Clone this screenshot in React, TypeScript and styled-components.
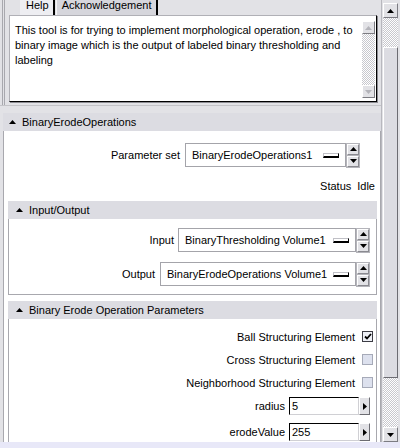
import React from 'react';
import styled, { createGlobalStyle } from 'styled-components';

const BG = '#e2e2e6';
const HEADER = '#dcdce2';
const LINE = '#a8a8ae';
const DITHER = 'repeating-conic-gradient(#ffffff 0 25%, #c8c8ce 0 50%) 0 0 / 2px 2px';

const GlobalStyle = createGlobalStyle`
  html, body { margin: 0; padding: 0; background: ${BG}; }
  body {
    font-family: "Liberation Sans", Arial, Helvetica, sans-serif;
    font-size: 11px;
    color: #000;
  }
  * { box-sizing: border-box; }
`;

const Svg = styled.svg`
  display: block;
  flex: none;
`;

type Dir = 'up' | 'down' | 'right';
const Arrow: React.FC<{ dir: Dir; w: number; h: number; color?: string }> = ({ dir, w, h, color = '#000' }) => {
  const pts =
    dir === 'up'
      ? `0,${h} ${w / 2},0 ${w},${h}`
      : dir === 'down'
      ? `0,0 ${w},0 ${w / 2},${h}`
      : `0,0 ${w},${h / 2} 0,${h}`;
  return (
    <Svg width={w} height={h} viewBox={`0 0 ${w} ${h}`}>
      <polygon points={pts} fill={color} />
    </Svg>
  );
};

const Screen = styled.div`
  width: 400px;
  height: 448px;
  display: flex;
  flex-direction: column;
  overflow: hidden;
  background: ${BG};
`;

const Window = styled.div`
  flex: 0 0 442px;
  display: flex;
  overflow: hidden;
`;

const BottomStrip = styled.div`
  flex: 1;
  background: #e8e8f8;
`;

const Main = styled.div`
  width: 381px;
  flex: none;
  display: flex;
  flex-direction: column;
  overflow: hidden;
`;

/* ---------- top tab panel ---------- */
const TopPanel = styled.div`
  height: 106px;
  flex: none;
  margin-bottom: 7px;
  display: flex;
  flex-direction: column;
  border-bottom: 1px solid #c4c4c8;
  box-shadow: inset 2px 0 0 ${BG}, inset 3px 0 0 ${LINE}, inset 4px 0 0 ${BG}, inset 5px 0 0 ${LINE};
`;

const TabBar = styled.div`
  height: 15px;
  display: flex;
  padding-left: 20px;
  flex: none;
`;

const Tab = styled.div<{ $active?: boolean }>`
  height: 15px;
  line-height: 11px;
  padding: 0 4px 0 5px;
  background: ${(p) => (p.$active ? '#eeeef2' : '#d6d6dc')};
  border-right: 2px solid #000;
  border-left: 1px solid ${(p) => (p.$active ? 'transparent' : '#f4f4f6')};
  margin-right: 1px;
`;

const TextBox = styled.div`
  margin-left: 9px;
  width: 368px;
  height: 87px;
  background: #fff;
  border: 1px solid;
  border-color: #b0b0b6 #000 #000 #b0b0b6;
  box-shadow: 1px 1px 0 #8c8c92;
  display: flex;
`;

const TextContent = styled.div`
  flex: 1;
  padding: 7px 5px;
  line-height: 15px;
  white-space: pre-line;
`;

const MiniScroll = styled.div`
  width: 13px;
  margin: 5px 1px 3px 0;
  display: flex;
  flex-direction: column;
`;

const RaisedBtn = styled.div<{ $h?: number }>`
  height: ${(p) => p.$h ?? 13}px;
  flex: none;
  background: ${BG};
  border: 1px solid;
  border-color: #ffffff #7c7c82 #7c7c82 #ffffff;
  display: flex;
  align-items: center;
  justify-content: center;
`;

const Dither = styled.div`
  flex: 1;
  background: ${DITHER};
  display: flex;
  flex-direction: column;
`;

/* ---------- sections ---------- */
const Section = styled.section<{ $nested?: boolean; $mt?: number }>`
  display: flex;
  flex-direction: column;
  flex: none;
  margin: ${(p) => (p.$nested ? `${p.$mt ?? 0}px 3px 0 4px` : '0 0 0 3px')};
`;

const SectionHeader = styled.div<{ $nested?: boolean }>`
  height: 18px;
  background: ${HEADER};
  display: flex;
  align-items: center;
  gap: 6px;
  padding-left: ${(p) => (p.$nested ? 8 : 6)}px;
  flex: none;
`;

const SectionBody = styled.div<{ $pad?: string }>`
  background: #fff;
  border: 1px solid ${LINE};
  border-top: none;
  padding: ${(p) => p.$pad ?? '0'};
  display: flex;
  flex-direction: column;
`;

const FieldRow = styled.div<{ $right: number; $gap?: number; $mt?: number }>`
  display: flex;
  justify-content: flex-end;
  align-items: center;
  padding-right: ${(p) => p.$right}px;
  margin-top: ${(p) => p.$mt ?? 0}px;
  gap: ${(p) => p.$gap ?? 5}px;
  flex: none;
`;

const Label = styled.span`
  white-space: nowrap;
`;

const ComboWrap = styled.div`
  display: flex;
  align-items: center;
  gap: 1px;
`;

const Combo = styled.div<{ $w: number }>`
  width: ${(p) => p.$w}px;
  height: 24px;
  border: 1px solid #a4a4aa;
  background: #fff;
  display: flex;
  align-items: center;
  justify-content: space-between;
  padding: 0 6px 0 6px;
`;

const DropBar = styled.div`
  width: 16px;
  height: 5px;
  background: #ffffff;
  border: 1px solid;
  border-color: #c0c0c6 #000 #000 #c0c0c6;
  border-bottom-width: 2px;
`;

const Spinner = styled.div`
  display: flex;
  flex-direction: column;
  gap: 1px;
`;

const SpinBtn = styled.div`
  width: 12px;
  height: 11px;
  background: ${BG};
  border: 1px solid;
  border-color: #ffffff #8a8a90 #8a8a90 #ffffff;
  outline: 1px solid #b4b4ba;
  display: flex;
  align-items: center;
  justify-content: center;
`;

const StatusRow = styled.div`
  display: flex;
  justify-content: flex-end;
  gap: 6px;
  padding-right: 5px;
  margin-top: 12px;
  height: 15px;
  line-height: 15px;
`;

const CheckRow = styled.div`
  height: 23px;
  display: flex;
  justify-content: flex-end;
  align-items: center;
  gap: 7px;
  padding-right: 3px;
  flex: none;
`;

const CheckBox = styled.div<{ $checked?: boolean }>`
  width: 11px;
  height: 11px;
  border: 1px solid ${(p) => (p.$checked ? '#3c3c44' : '#a6aab8')};
  background: ${(p) => (p.$checked ? '#eef0f6' : '#dde1ee')};
  display: flex;
  align-items: center;
  justify-content: center;
`;

const EntryRow = styled.div<{ $mt: number }>`
  height: 18px;
  display: flex;
  justify-content: flex-end;
  align-items: center;
  gap: 4px;
  padding-right: 6px;
  margin-top: ${(p) => p.$mt}px;
  flex: none;
`;

const EntryGroup = styled.div`
  display: flex;
  height: 18px;
`;

const Entry = styled.div`
  width: 70px;
  height: 18px;
  background: #fff;
  border: 1px solid;
  border-color: #000 #d0d0d4 #d0d0d4 #000;
  padding-left: 2px;
  line-height: 16px;
`;

const EntryArrow = styled.div`
  width: 11px;
  height: 18px;
  background: ${BG};
  border: 1px solid;
  border-color: #ffffff #6c6c72 #6c6c72 #ffffff;
  display: flex;
  align-items: center;
  justify-content: center;
`;

/* ---------- main scrollbar ---------- */
const VScroll = styled.div`
  width: 19px;
  flex: none;
  border-left: 1px solid #b8b8be;
  padding: 3px 2px 0 1px;
  display: flex;
  flex-direction: column;
`;

const Thumb = styled.div`
  margin-top: 29px;
  height: 331px;
  background: #dcdce2;
  border: 1px solid;
  border-color: #ffffff #6c6c72 #6c6c72 #ffffff;
  flex: none;
`;

const ComboField: React.FC<{ label: string; value: string; w: number; right: number; gap: number; mt?: number }> = ({
  label,
  value,
  w,
  right,
  gap,
  mt,
}) => (
  <FieldRow $right={right} $gap={gap} $mt={mt}>
    <Label>{label}</Label>
    <ComboWrap>
      <Combo $w={w}>
        <Label>{value}</Label>
        <DropBar />
      </Combo>
      <Spinner>
        <SpinBtn>
          <Arrow dir="up" w={7} h={4} />
        </SpinBtn>
        <SpinBtn>
          <Arrow dir="down" w={7} h={4} />
        </SpinBtn>
      </Spinner>
    </ComboWrap>
  </FieldRow>
);

const Check: React.FC<{ label: string; checked?: boolean }> = ({ label, checked }) => (
  <CheckRow>
    <Label>{label}</Label>
    <CheckBox $checked={checked}>
      {checked && (
        <Svg width={8} height={7} viewBox="0 0 8 7">
          <polyline points="1,3.5 3,5.5 7,1" fill="none" stroke="#000" strokeWidth={1.8} />
        </Svg>
      )}
    </CheckBox>
  </CheckRow>
);

const EntryField: React.FC<{ label: string; value: string; mt: number }> = ({ label, value, mt }) => (
  <EntryRow $mt={mt}>
    <Label>{label}</Label>
    <EntryGroup>
      <Entry>{value}</Entry>
      <EntryArrow>
        <Arrow dir="right" w={4} h={7} />
      </EntryArrow>
    </EntryGroup>
  </EntryRow>
);

const HELP_TEXT =
  'This tool is for trying to implement morphological operation, erode , to\nbinary image which is the output of labeled binary thresholding and\nlabeling';

export default function App() {
  return (
    <>
      <GlobalStyle />
      <Screen>
        <Window>
          <Main>
            <TopPanel>
              <TabBar>
                <Tab $active>Help</Tab>
                <Tab>Acknowledgement</Tab>
              </TabBar>
              <TextBox>
                <TextContent>{HELP_TEXT}</TextContent>
                <MiniScroll>
                  <RaisedBtn>
                    <Arrow dir="up" w={7} h={4} color="#b4b4ba" />
                  </RaisedBtn>
                  <Dither />
                  <RaisedBtn>
                    <Arrow dir="down" w={7} h={4} color="#b4b4ba" />
                  </RaisedBtn>
                </MiniScroll>
              </TextBox>
            </TopPanel>

            <Section>
              <SectionHeader>
                <Arrow dir="up" w={7} h={4} />
                <Label>BinaryErodeOperations</Label>
              </SectionHeader>
              <SectionBody $pad="12px 0 0 0">
                <ComboField label="Parameter set" value="BinaryErodeOperations1" w={161} right={21} gap={5} />
                <StatusRow>
                  <Label>Status</Label>
                  <Label>Idle</Label>
                </StatusRow>

                <Section $nested $mt={7}>
                  <SectionHeader $nested>
                    <Arrow dir="up" w={7} h={4} />
                    <Label>Input/Output</Label>
                  </SectionHeader>
                  <SectionBody $pad="9px 0 8px 0">
                    <ComboField label="Input" value="BinaryThresholding Volume1" w={178} right={7} gap={4} />
                    <ComboField label="Output" value="BinaryErodeOperations Volume1" w={196} right={7} gap={5} mt={10} />
                  </SectionBody>
                </Section>

                <Section $nested $mt={6}>
                  <SectionHeader $nested>
                    <Arrow dir="up" w={7} h={4} />
                    <Label>Binary Erode Operation Parameters</Label>
                  </SectionHeader>
                  <SectionBody $pad="6px 0 20px 0">
                    <Check label="Ball Structuring Element" checked />
                    <Check label="Cross Structuring Element" />
                    <Check label="Neighborhood Structuring Element" />
                    <EntryField label="radius" value="5" mt={3} />
                    <EntryField label="erodeValue" value="255" mt={8} />
                  </SectionBody>
                </Section>
              </SectionBody>
            </Section>
          </Main>

          <VScroll>
            <RaisedBtn $h={15}>
              <Arrow dir="up" w={7} h={4} />
            </RaisedBtn>
            <Dither>
              <Thumb />
            </Dither>
            <RaisedBtn $h={15}>
              <Arrow dir="down" w={7} h={4} />
            </RaisedBtn>
          </VScroll>
        </Window>
        <BottomStrip />
      </Screen>
    </>
  );
}
